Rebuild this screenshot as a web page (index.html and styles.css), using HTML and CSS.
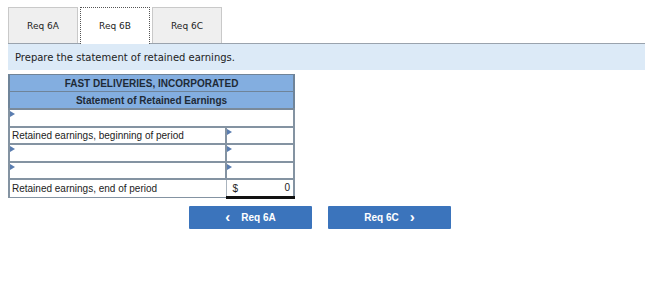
FILE: index.html
```html
<!DOCTYPE html>
<html>
<head>
<meta charset="utf-8">
<link rel="stylesheet" href="styles.css">
</head>
<body>
<div class="page">
  <div class="tabs">
    <div class="tab">Req 6A</div>
    <div class="tab active">Req 6B</div>
    <div class="tab">Req 6C</div>
  </div>
  <div class="banner">Prepare the statement of retained earnings.</div>
  <table class="stmt">
    <colgroup><col class="c1"><col class="c2"></colgroup>
    <tr><th colspan="2" class="h1">FAST DELIVERIES, INCORPORATED</th></tr>
    <tr><th colspan="2" class="h2">Statement of Retained Earnings</th></tr>
    <tr><td colspan="2" class="inp"><span class="tri"></span></td></tr>
    <tr><td class="lbl">Retained earnings, beginning of period</td><td class="val inp"><span class="tri"></span></td></tr>
    <tr><td class="inp"><span class="tri"></span></td><td class="val inp"><span class="tri"></span></td></tr>
    <tr><td class="inp"><span class="tri"></span></td><td class="val inp"><span class="tri"></span></td></tr>
    <tr><td class="lbl">Retained earnings, end of period</td><td class="val total"><span class="dollar">$</span><span class="num">0</span></td></tr>
  </table>
  <div class="nav">
    <div class="btn"><span class="chev">&lsaquo;</span>Req 6A</div>
    <div class="btn">Req 6C<span class="chev r">&rsaquo;</span></div>
  </div>
</div>
</body>
</html>
```
FILE: styles.css
```css
html, body { margin: 0; background: #fff; }
.page { padding: 7px 0 0 8px; width: 637px; font-family: "Liberation Sans", Arial, sans-serif; }
.tabs { display: flex; gap: 1px; height: 36px; }
.tab {
  width: 70px; box-sizing: border-box; height: 36px;
  background: #efefef; border: 1px solid #c9c9c9; border-bottom: none;
  font-family: "DejaVu Sans", Verdana, sans-serif; font-size: 9px; color: #222;
  display: flex; align-items: center; justify-content: center;
}
.tab.active { background: #fff; border: 1px dotted #555; border-bottom: none; height: 37px; margin-left: 1px; margin-right: 1px; }
.banner {
  height: 27px; box-sizing: border-box; border-top: 1px solid #9aa3ad;
  background: #dceaf7; padding: 0 7px; display: flex; align-items: center;
  font-family: "DejaVu Sans", Verdana, sans-serif; font-size: 10px; color: #222;
}
.stmt { margin-top: 4px; border-collapse: collapse; width: 285px; table-layout: fixed; }
.stmt col.c1 { width: 217px; }
.stmt col.c2 { width: 68px; }
.stmt th { background: #83aee0; color: #1e2a36; font-size: 10px; font-weight: bold; height: 16px; padding: 0; border: 1px solid #6f8499; border-left-width: 2px; border-right-width: 2px; white-space: nowrap; }
.stmt th.h2 { border-bottom: 2px solid #7a8a9a; }
.stmt td { height: 15.5px; padding: 0 2px; border: 2px solid #8493a2; background: #fff; font-size: 10px; color: #222; position: relative; white-space: nowrap; overflow: hidden; }
.stmt td.lbl { border-width: 1px 1px 1px 2px; border-color: #8493a2 #aab4be #8493a2 #8493a2; }
.tri {
  position: absolute; left: 0; top: 1px; width: 0; height: 0;
  border-left: 5px solid #5a7db0; border-top: 3px solid transparent; border-bottom: 3px solid transparent;
}
.stmt td.total { border-top: 1px solid #111; border-bottom: 3px solid #111; border-left: 1px solid #fff; text-align: right; padding-right: 3px; }
.stmt td.total .dollar { position: absolute; left: 6px; top: 3px; }
.nav { display: flex; gap: 16px; margin: 7px 0 0 181px; }
.btn {
  width: 123px; height: 23px; background: #3b74bc; color: #fff;
  font-size: 10px; font-weight: bold; display: flex; align-items: center; justify-content: center;
  border-radius: 1px;
}
.chev { font-size: 15px; font-weight: bold; margin-right: 11px; line-height: 1; position: relative; top: -1px; }
.chev.r { margin-right: 0; margin-left: 11px; }
```
